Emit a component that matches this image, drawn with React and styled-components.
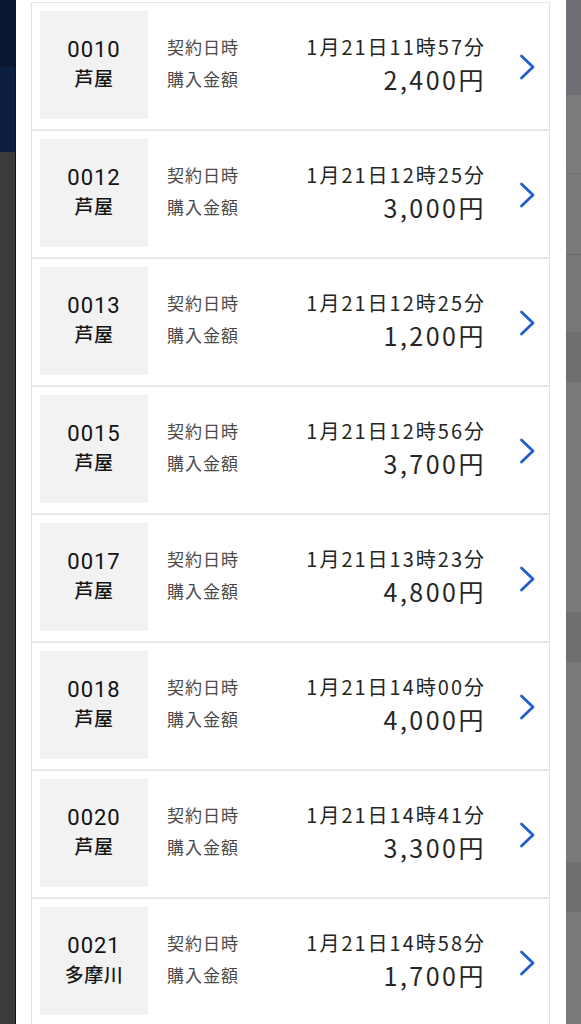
import React from "react";
import styled, { createGlobalStyle } from "styled-components";

const GlobalStyle = createGlobalStyle`
  html, body { margin: 0; padding: 0; height: 100%; overflow: hidden; }
  body { font-family: "Noto Sans CJK JP", "Noto Sans", sans-serif; background: #3b3b3b; }
  #root { height: 100%; }
`;

const Page = styled.div`
  display: flex;
  height: 1024px;
  overflow: hidden;
`;

const LeftBackdrop = styled.div`
  width: 15px;
  flex: none;
  border-right: 1px solid #141414;
  background: #3b3b3b;
  display: flex;
  flex-direction: column;
`;

const Band = styled.div`
  height: ${(p) => p.$h}px;
  flex: none;
  background: ${(p) => p.$c};
  border-bottom: ${(p) => (p.$line ? `1px solid ${p.$line}` : "none")};
`;

const RightBackdrop = styled.div`
  flex: 1;
  background: #797979;
  display: flex;
  flex-direction: column;
`;

const Modal = styled.div`
  width: 550px;
  flex: none;
  box-sizing: border-box;
  background: #fff;
  padding: 2px 16px 0 15px;
`;

const List = styled.div`
  border-left: 1px solid #e2e2e2;
  border-right: 1px solid #e2e2e2;
  border-top: 1px solid #e6e6e6;
`;

const Row = styled.div`
  display: flex;
  align-items: center;
  height: 128px;
  box-sizing: border-box;
  padding: 8px 0 10px 8px;
  border-bottom: 2px solid #e8e8e8;
`;

const CodeBox = styled.div`
  width: 108px;
  height: 108px;
  flex: none;
  background: #f2f2f2;
  display: flex;
  flex-direction: column;
  align-items: center;
  justify-content: center;
  color: #151515;
  line-height: 28px;
  padding-bottom: 2px;
  box-sizing: border-box;
`;

const CodeNum = styled.span`
  font-family: Roboto, "Liberation Sans", sans-serif;
  font-size: 22px;
  font-weight: 400;
  letter-spacing: 1px;
  color: #111;
`;

const Place = styled.span`
  font-size: 19px;
  font-weight: 500;
  letter-spacing: 0.5px;
`;

const Info = styled.div`
  margin-left: 19px;
  width: 317px;
  flex: none;
  display: grid;
  grid-template-columns: auto 1fr;
  grid-auto-rows: 32px;
  align-items: center;
  margin-top: -5px;
`;

const Label = styled.div`
  font-size: 17px;
  color: #4a4a4a;
  letter-spacing: 1px;
`;

const Value = styled.div`
  text-align: right;
  color: #262626;
  font-size: ${(p) => (p.$big ? 25 : 20)}px;
  letter-spacing: ${(p) => (p.$big ? 2.5 : 2)}px;
  margin-right: -2px;
`;

const ChevronCell = styled.div`
  flex: 1;
  display: flex;
  align-items: center;
  padding-left: 35px;
  padding-top: 4px;
`;

const rows = [
  ["0010", "芦屋", "1月21日11時57分", "2,400円"],
  ["0012", "芦屋", "1月21日12時25分", "3,000円"],
  ["0013", "芦屋", "1月21日12時25分", "1,200円"],
  ["0015", "芦屋", "1月21日12時56分", "3,700円"],
  ["0017", "芦屋", "1月21日13時23分", "4,800円"],
  ["0018", "芦屋", "1月21日14時00分", "4,000円"],
  ["0020", "芦屋", "1月21日14時41分", "3,300円"],
  ["0021", "多摩川", "1月21日14時58分", "1,700円"],
];

const Chevron = () => (
  <svg width="18" height="26" viewBox="0 0 18 26">
    <path d="M2.5 2 L14 13 L2.5 24" fill="none" stroke="#1f5fcc" strokeWidth="2.8" strokeLinecap="round" strokeLinejoin="round" />
  </svg>
);

export default function App() {
  return (
    <>
      <GlobalStyle />
      <Page>
        <LeftBackdrop>
          <Band $h={67} $c="#0a1733" />
          <Band $h={85} $c="#0d1f40" />
        </LeftBackdrop>
        <Modal>
          <List>
            {rows.map(([code, place, date, amount]) => (
              <Row key={code}>
                <CodeBox>
                  <CodeNum>{code}</CodeNum>
                  <Place>{place}</Place>
                </CodeBox>
                <Info>
                  <Label>契約日時</Label>
                  <Value>{date}</Value>
                  <Label>購入金額</Label>
                  <Value $big>{amount}</Value>
                </Info>
                <ChevronCell>
                  <Chevron />
                </ChevronCell>
              </Row>
            ))}
          </List>
        </Modal>
        <RightBackdrop>
          <Band $h={95} $c="#6e7075" />
          <Band $h={78} $c="#7b7b7b" $line="#6c6c6c" />
          <Band $h={80} $c="#7a7a7a" $line="#6c6c6c" />
          <Band $h={77} $c="#777777" />
          <Band $h={50} $c="#6f6f6f" />
          <Band $h={230} $c="#7a7a7a" />
          <Band $h={50} $c="#6f6f6f" />
          <Band $h={200} $c="#7a7a7a" />
          <Band $h={50} $c="#6f6f6f" />
        </RightBackdrop>
      </Page>
    </>
  );
}
